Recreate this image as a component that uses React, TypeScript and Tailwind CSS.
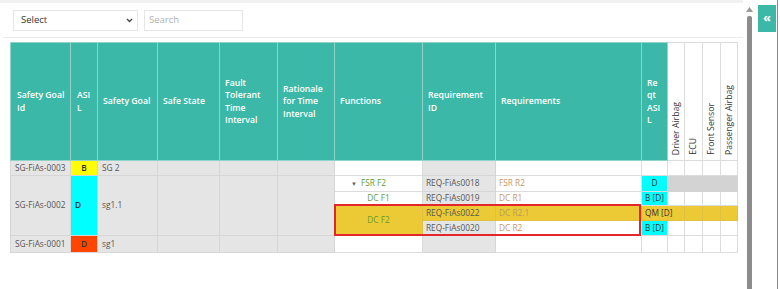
import React from "react";

const H = "bg-[#3bb8a7] text-white font-semibold text-left align-middle px-[5px] border border-[#8fd3c9] leading-[12.5px] whitespace-nowrap";
const V = "bg-white border border-[#dcdcdc] align-bottom pb-[5px] text-[#333] font-normal";
const G = "bg-[#e5e5e5] border border-[#d6d6d6] text-[#555] px-[4px] whitespace-nowrap";
const W = "bg-white border border-[#dcdcdc] text-[#555] px-[3px] whitespace-nowrap";
const GR = "bg-[#e5e5e5] border border-[#d6d6d6] text-[#555] px-[3px] whitespace-nowrap";
const Y = "bg-[#ecca35] border border-[#e0c040] px-[3px] whitespace-nowrap";
const CY = "bg-[#00ffff] border border-[#dcdcdc] text-[#333] px-[3px] whitespace-nowrap";

function VText({ children }: { children: React.ReactNode }) {
  return (
    <div className="flex justify-center">
      <span className="[writing-mode:vertical-rl] rotate-180 whitespace-nowrap leading-[11px]">{children}</span>
    </div>
  );
}

export default function App() {
  return (
    <div className="w-[780px] h-[289px] bg-white overflow-hidden flex font-['Open_Sans',sans-serif] text-[8.3px]">
      <div className="w-[743px] flex flex-col">
        <div className="h-[3px] bg-[#f1f1f1]" />
        <div className="flex gap-[6px] pl-[13px] pt-[7px]">
          <div className="w-[125px] h-[21px] border border-[#e6e6e6] flex items-center justify-between pl-[7px] pr-[4px] text-[9.5px] text-[#333]">
            <span>Select</span>
            <svg width="7" height="5" viewBox="0 0 7 5"><path d="M1 1 L3.5 3.5 L6 1" stroke="#444" strokeWidth="1.3" fill="none" /></svg>
          </div>
          <div className="w-[99px] h-[21px] border border-[#e6e6e6] flex items-center pl-[4px] text-[9.5px] text-[#b0b0b0]">Search</div>
        </div>
        <div className="h-px bg-[#ececec] ml-[3px] mt-[6px]" />
        <div className="relative ml-[10px] mt-[4px] w-[727px]">
          <table className="table-fixed border-collapse w-[727px]">
            <colgroup>
              <col className="w-[60px]" />
              <col className="w-[27px]" />
              <col className="w-[60px]" />
              <col className="w-[62px]" />
              <col className="w-[58px]" />
              <col className="w-[57px]" />
              <col className="w-[88px]" />
              <col className="w-[73px]" />
              <col className="w-[146px]" />
              <col className="w-[26px]" />
              <col className="w-[17px]" />
              <col className="w-[18px]" />
              <col className="w-[18px]" />
              <col className="w-[17px]" />
            </colgroup>
            <thead>
              <tr className="h-[118px] text-[8.7px]">
                <th className={H + " !pl-[6px]"}>Safety Goal<br />Id</th>
                <th className={H + " !pl-[6px]"}>ASI<br />L</th>
                <th className={H}>Safety Goal</th>
                <th className={H}>Safe State</th>
                <th className={H}>Fault<br />Tolerant<br />Time<br />Interval</th>
                <th className={H}>Rationale<br />for Time<br />Interval</th>
                <th className={H}>Functions</th>
                <th className={H}>Requirement<br />ID</th>
                <th className={H}>Requirements</th>
                <th className={H}>Re<br />qt<br />ASI<br />L</th>
                <th className={V}><VText>Driver Airbag</VText></th>
                <th className={V}><VText>ECU</VText></th>
                <th className={V}><VText>Front Sensor</VText></th>
                <th className={V}><VText>Passenger Airbag</VText></th>
              </tr>
            </thead>
            <tbody>
              <tr className="h-[15px]">
                <td className={G}>SG-FiAs-0003</td>
                <td className="bg-[#ffff00] border border-[#d6d6d6] text-center font-semibold text-[#333]">B</td>
                <td className={G}>SG 2</td>
                <td className={G} />
                <td className={G} />
                <td className={G} />
                <td className={W} />
                <td className={GR} />
                <td className={W} />
                <td className={W} />
                <td className={W} />
                <td className={W} />
                <td className={W} />
                <td className={W} />
              </tr>
              <tr className="h-[16px]">
                <td rowSpan={4} className={G}>SG-FiAs-0002</td>
                <td rowSpan={4} className="bg-[#00ffff] border border-[#d6d6d6] pl-[4px] font-semibold text-[#333]">D</td>
                <td rowSpan={4} className={G}>sg1.1</td>
                <td rowSpan={4} className={G} />
                <td rowSpan={4} className={G} />
                <td rowSpan={4} className={G} />
                <td className={W + " !pl-[16px] !text-[#5e9c3a]"}>
                  <span className="text-[6px] !text-[#666] mr-[4px]">▼</span>FSR F2
                </td>
                <td className={GR}>REQ-FiAs0018</td>
                <td className={W + " !text-[#c99562]"}>FSR R2</td>
                <td className={CY + " text-center"}>D</td>
                <td className="bg-[#d3d3d3] border border-[#d3d3d3]" />
                <td className="bg-[#d3d3d3] border border-[#d3d3d3]" />
                <td className="bg-[#d3d3d3] border border-[#d3d3d3]" />
                <td className="bg-[#d3d3d3] border border-[#d3d3d3]" />
              </tr>
              <tr className="h-[14px]">
                <td className={W + " text-center !text-[#5e9c3a]"}>DC F1</td>
                <td className={GR}>REQ-FiAs0019</td>
                <td className={W + " !text-[#c99562]"}>DC R1</td>
                <td className={CY}>B [D]</td>
                <td className={W} />
                <td className={W} />
                <td className={W} />
                <td className={W} />
              </tr>
              <tr className="h-[15px]">
                <td rowSpan={2} className={Y + " text-center text-[#6a9a2a]"}>DC F2</td>
                <td className={Y + " text-[#555]"}>REQ-FiAs0022</td>
                <td className={Y + " text-[#b99a5c]"}>DC R2.1</td>
                <td className={Y + " text-[#333] overflow-visible"}>QM [D]</td>
                <td className="bg-[#ecca35] border border-[#e0c040]" />
                <td className="bg-[#ecca35] border border-[#e0c040]" />
                <td className="bg-[#ecca35] border border-[#e0c040]" />
                <td className="bg-[#ecca35] border border-[#e0c040]" />
              </tr>
              <tr className="h-[15px]">
                <td className={GR}>REQ-FiAs0020</td>
                <td className={W + " !text-[#c99562]"}>DC R2</td>
                <td className={CY}>B [D]</td>
                <td className={W} />
                <td className={W} />
                <td className={W} />
                <td className={W} />
              </tr>
              <tr className="h-[17px]">
                <td className={G}>SG-FiAs-0001</td>
                <td className="bg-[#ff4500] border border-[#d6d6d6] text-center font-semibold text-[#333]">D</td>
                <td className={G}>sg1</td>
                <td className={G} />
                <td className={G} />
                <td className={G} />
                <td className={W} />
                <td className={GR} />
                <td className={W} />
                <td className={W} />
                <td className={W} />
                <td className={W} />
                <td className={W} />
                <td className={W} />
              </tr>
            </tbody>
          </table>
          <div className="absolute left-[324px] top-[162px] w-[307px] h-[32px] border-2 border-[#e3262b] pointer-events-none" />
        </div>
      </div>
      <div className="w-[13px] flex flex-col items-center pt-[7px]">
        <svg width="7" height="5" viewBox="0 0 7 5"><path d="M0 5 L3.5 0 L7 5 Z" fill="#9a9a9a" /></svg>
        <div className="mt-[4px] w-[5px] flex-1 bg-[#8c8c8c] rounded-t-[2px]" />
      </div>
      <div className="ml-[2px] pt-[5px]">
        <div className="w-[18px] h-[27px] bg-[#3bb8a7] flex items-center justify-center text-white font-bold text-[13px] leading-none pb-[2px]">«</div>
      </div>
      <div className="ml-[1px] w-px h-full bg-[#8a8a8a]" />
    </div>
  );
}
